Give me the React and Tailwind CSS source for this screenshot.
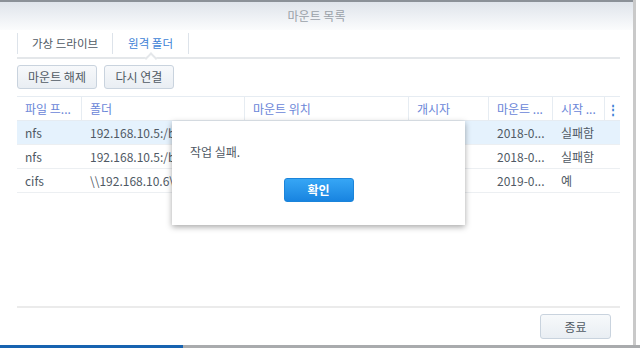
import React from "react";

const font = { fontFamily: '"Noto Sans CJK KR", "Noto Sans", sans-serif' };

const cols = [
  { w: "w-[65px]", label: "파일 프..." },
  { w: "w-[163px]", label: "폴더" },
  { w: "w-[164px]", label: "마운트 위치" },
  { w: "w-[80px]", label: "개시자" },
  { w: "w-[64px]", label: "마운트 ..." },
  { w: "w-[52px]", label: "시작 ..." },
];

const rows = [
  ["nfs", "192.168.10.5:/b", "", "", "2018-0...", "실패함"],
  ["nfs", "192.168.10.5:/b", "", "", "2018-0...", "실패함"],
  ["cifs", "\\\\192.168.10.6\\", "", "", "2019-0...", "예"],
];

export default function App() {
  return (
    <div className="relative w-[640px] h-[348px] overflow-hidden bg-[#f4f5f6] text-[12px]" style={font}>
      <div className="flex h-[345px]">
        <div className="flex flex-col w-[633px] h-full bg-white border-t-2 border-[#8b9198]">
          <div className="h-[28px] flex items-center justify-center bg-gradient-to-b from-[#dfe4eb] to-[#fbfcfd] text-[#9aa1a8] text-[12px]">
            마운트 목록
          </div>
          <div className="flex flex-col flex-1 pl-[17px] pr-[13px]">
            <div className="relative flex h-[29px] items-stretch border-b-2 border-[#e4e7ea]">
              <div className="flex items-center my-[3px] border-l border-r border-[#dde3ea] px-[14px] text-[#505a64] text-[11.5px]">가상 드라이브</div>
              <div className="relative flex items-center my-[3px] border-r border-[#dde3ea] px-[15px] text-[#3d7fd6] text-[11.5px]">
                원격 폴더
                <div className="absolute left-1/2 -translate-x-1/2 bottom-[-9px] w-[9px] h-[9px] rotate-45 bg-white border-l-2 border-t-2 border-[#e4e7ea]" />
              </div>
            </div>
            <div className="flex gap-[7px] mt-[6px]">
              <button className="w-[80px] h-[24px] rounded-[3px] border border-[#c9d3de] bg-gradient-to-b from-[#f7f9fb] to-[#e9eef3] text-[#505a64] text-[12px]">마운트 해제</button>
              <button className="w-[70px] h-[24px] rounded-[3px] border border-[#c9d3de] bg-gradient-to-b from-[#f7f9fb] to-[#e9eef3] text-[#505a64] text-[12px]">다시 연결</button>
            </div>
            <div className="flex flex-col mt-[7px] border-t border-[#e6ecf2] flex-1">
              <div className="flex h-[24px] border-b border-[#e6ecf2]">
                {cols.map((c, i) => (
                  <div key={i} className={`${c.w} flex items-center px-[8px] text-[#6a86d8] border-r border-[#e6ecf2] whitespace-nowrap overflow-hidden`}>
                    {c.label}
                  </div>
                ))}
                <div className="flex-1 flex items-center justify-center text-[#3d7fd6] font-bold">⋮</div>
              </div>
              {rows.map((r, ri) => (
                <div key={ri} className={`flex h-[24px] border-b border-[#eceff2] ${ri === 0 ? "bg-[#e5f2fd]" : ""}`}>
                  {r.map((t, i) => (
                    <div key={i} className={`${cols[i].w} flex items-center px-[8px] text-[#4f5964] whitespace-nowrap overflow-hidden`}>
                      {t}
                    </div>
                  ))}
                  <div className="flex-1" />
                </div>
              ))}
              <div className="flex-1" />
            </div>
            <div className="border-t-2 border-[#ebebeb] h-[39px] flex items-center justify-end pr-[9px]">
              <button className="w-[71px] h-[25px] rounded-[3px] border border-[#c9d3de] bg-gradient-to-b from-[#f7f9fb] to-[#e9eef3] text-[#505a64] text-[12px]">종료</button>
            </div>
          </div>
        </div>
        <div className="w-[3px] h-full bg-[#c9c9c9]" />
        <div className="flex-1 h-full bg-white" />
      </div>
      <div className="flex h-[3px]">
        <div className="w-[183px] bg-[#1763b0]" />
        <div className="flex-1 bg-[#a9abad]" />
      </div>
      <div className="absolute left-[172px] top-[121px] w-[293px] h-[104px] bg-white shadow-[0_2px_6px_rgba(0,0,0,0.35)] flex flex-col">
        <div className="pl-[18px] pt-[22px] text-[#4f5964] text-[12px]">작업 실패.</div>
        <div className="flex justify-center mt-[17px]">
          <button className="w-[70px] h-[24px] rounded-[3px] border border-[#1b84da] bg-gradient-to-b from-[#36a6f5] to-[#1884e0] text-white font-bold text-[12px]">확인</button>
        </div>
      </div>
    </div>
  );
}
